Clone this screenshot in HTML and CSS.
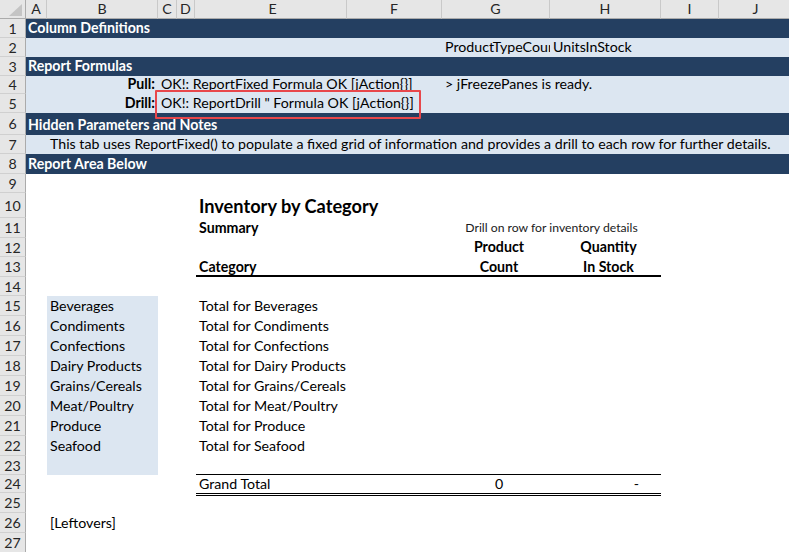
FILE: index.html
```html
<!DOCTYPE html>
<html>
<head>
<meta charset="utf-8">
<title>Inventory by Category</title>
<link rel="stylesheet" href="styles.css">
</head>
<body>
<div class="sheet">
  <div class="row h19 hdr">
    <div class="corner"><svg width="26" height="19" viewBox="0 0 26 19"><polygon points="22,4 22,16 9,16" fill="#c4c4c4"/></svg></div>
    <div class="colhdr A">A</div>
    <div class="colhdr B">B</div>
    <div class="colhdr C">C</div>
    <div class="colhdr D">D</div>
    <div class="colhdr E">E</div>
    <div class="colhdr F">F</div>
    <div class="colhdr G">G</div>
    <div class="colhdr H">H</div>
    <div class="colhdr I">I</div>
    <div class="colhdr J">J</div>
  </div>

  <div class="row h19">
    <div class="rh">1</div>
    <div class="cell all dark band">Column Definitions</div>
  </div>
  <div class="row h19">
    <div class="rh">2</div>
    <div class="all light"></div>
    <div class="cell G clip">ProductTypeCount</div>
    <div class="cell H">UnitsInStock</div>
  </div>
  <div class="row h19">
    <div class="rh">3</div>
    <div class="cell all dark band">Report Formulas</div>
  </div>
  <div class="row h18">
    <div class="rh">4</div>
    <div class="all light"></div>
    <div class="cell B right bold">Pull:</div>
    <div class="cell C">OK!: ReportFixed Formula OK [jAction{}]</div>
    <div class="cell G">&gt; jFreezePanes is ready.</div>
  </div>
  <div class="row h19">
    <div class="rh">5</div>
    <div class="all light"></div>
    <div class="cell B right bold">Drill:</div>
    <div class="cell C">OK!: ReportDrill " Formula OK [jAction{}]</div>
  </div>
  <div class="row h22">
    <div class="rh">6</div>
    <div class="cell all dark band">Hidden Parameters and Notes</div>
  </div>
  <div class="row h19">
    <div class="rh">7</div>
    <div class="all light"></div>
    <div class="cell B">This tab uses ReportFixed() to populate a fixed grid of information and provides a drill to each row for further details.</div>
  </div>
  <div class="row h20">
    <div class="rh">8</div>
    <div class="cell all dark band">Report Area Below</div>
  </div>
  <div class="row h19">
    <div class="rh">9</div>
  </div>
  <div class="row h25">
    <div class="rh">10</div>
    <div class="cell E title">Inventory by Category</div>
  </div>
  <div class="row h20">
    <div class="rh">11</div>
    <div class="cell E bold">Summary</div>
    <div class="cell GH center small">Drill on row for inventory details</div>
  </div>
  <div class="row h19">
    <div class="rh">12</div>
    <div class="cell G center bold hdrcol">Product</div>
    <div class="cell H center bold hdrcol">Quantity</div>
  </div>
  <div class="row h20">
    <div class="rh">13</div>
    <div class="EH rule-thick"></div>
    <div class="cell E bold">Category</div>
    <div class="cell G center bold hdrcol">Count</div>
    <div class="cell H center bold hdrcol">In Stock</div>
  </div>
  <div class="row h19">
    <div class="rh">14</div>
  </div>
  <div class="row h20">
    <div class="rh">15</div>
    <div class="cell B light">Beverages</div>
    <div class="cell E">Total for Beverages</div>
  </div>
  <div class="row h20">
    <div class="rh">16</div>
    <div class="cell B light">Condiments</div>
    <div class="cell E">Total for Condiments</div>
  </div>
  <div class="row h20">
    <div class="rh">17</div>
    <div class="cell B light">Confections</div>
    <div class="cell E">Total for Confections</div>
  </div>
  <div class="row h20">
    <div class="rh">18</div>
    <div class="cell B light">Dairy Products</div>
    <div class="cell E">Total for Dairy Products</div>
  </div>
  <div class="row h20">
    <div class="rh">19</div>
    <div class="cell B light">Grains/Cereals</div>
    <div class="cell E">Total for Grains/Cereals</div>
  </div>
  <div class="row h20">
    <div class="rh">20</div>
    <div class="cell B light">Meat/Poultry</div>
    <div class="cell E">Total for Meat/Poultry</div>
  </div>
  <div class="row h20">
    <div class="rh">21</div>
    <div class="cell B light">Produce</div>
    <div class="cell E">Total for Produce</div>
  </div>
  <div class="row h20">
    <div class="rh">22</div>
    <div class="cell B light">Seafood</div>
    <div class="cell E">Total for Seafood</div>
  </div>
  <div class="row h19">
    <div class="rh">23</div>
    <div class="cell B light"></div>
  </div>
  <div class="row h18">
    <div class="rh">24</div>
    <div class="EH rule-total"></div>
    <div class="cell E total">Grand Total</div>
    <div class="cell G center total hdrcol">0</div>
    <div class="cell H right acct total">-</div>
  </div>
  <div class="row h20">
    <div class="rh">25</div>
  </div>
  <div class="row h20">
    <div class="rh">26</div>
    <div class="cell B">[Leftovers]</div>
  </div>
  <div class="row h20">
    <div class="rh">27</div>
  </div>

  <div class="callout"></div>
</div>
</body>
</html>
```

FILE: styles.css
```css
* {
  box-sizing: border-box;
}

html, body {
  margin: 0;
  padding: 0;
  width: 789px;
  height: 552px;
  overflow: hidden;
  background: #ffffff;
}

body {
  font-family: Lato, "Liberation Sans", sans-serif;
  font-size: 14.2px;
  color: #000000;
}

.sheet {
  position: relative;
  display: flex;
  flex-direction: column;
  width: 793px;
}

.row {
  display: grid;
  grid-template-columns: 26px 21px 111px 19px 18px 152px 95px 108px 111px 58px 74px;
  grid-template-rows: minmax(0, 1fr);
  flex: none;
}

.row > * {
  grid-row: 1;
  min-width: 0;
}

.h18 { height: 18px; }
.h19 { height: 19px; }
.h20 { height: 20px; }
.h21 { height: 21px; }
.h22 { height: 22px; }
.h25 { height: 25px; }

.A { grid-column: 2; }
.B { grid-column: 3; }
.C { grid-column: 4; }
.D { grid-column: 5; }
.E { grid-column: 6; }
.F { grid-column: 7; }
.G { grid-column: 8; }
.H { grid-column: 9; }
.I { grid-column: 10; }
.J { grid-column: 11; }
.all { grid-column: 2 / -1; }
.EH { grid-column: 6 / 10; }
.GH { grid-column: 8 / 10; }

/* headers */
.corner {
  grid-column: 1;
  background: #e6e6e6;
  border-right: 1px solid #ababab;
  border-bottom: 1px solid #ababab;
  line-height: 0;
}

.colhdr {
  background: #e6e6e6;
  border-right: 1px solid #c9c9c9;
  border-bottom: 1px solid #ababab;
  color: #262626;
  text-align: center;
  line-height: 18px;
  font-size: 14.2px;
}

.rh {
  grid-column: 1;
  background: #e6e6e6;
  border-right: 1px solid #ababab;
  border-bottom: 1px solid #d0d0d0;
  color: #262626;
  display: flex;
  align-items: center;
  justify-content: center;
  font-size: 14.2px;
}

/* cells */
.cell {
  display: flex;
  align-items: flex-end;
  padding: 0 3px 1px 3px;
  white-space: nowrap;
  line-height: 18px;
}

.clip {
  overflow: hidden;
}

.right {
  justify-content: flex-end;
}

.center {
  justify-content: center;
}

.bold {
  font-weight: bold;
}

.dark {
  background: #243f61;
}

.band {
  color: #ffffff;
  font-weight: bold;
  padding-left: 2px;
}

.light {
  background: #dce6f1;
}

.title {
  font-size: 18.2px;
  font-weight: bold;
  line-height: 22px;
  padding-left: 5px;
}

.E {
  padding-left: 4px;
}

.hdrcol {
  padding-left: 7px;
  padding-right: 1px;
}

.small {
  font-size: 12.2px;
  color: #1a1a1a;
}

.acct {
  padding-right: 22px;
}

.total {
  padding-bottom: 0;
}

.rule-thick {
  border-bottom: 2px solid #000000;
  margin-left: 1px;
}

.rule-total {
  align-self: start;
  height: 22px;
  margin-top: -1px;
  margin-left: 1px;
  border-top: 1px solid #000000;
  border-bottom: 3px double #000000;
}

.callout {
  position: absolute;
  left: 155px;
  top: 90px;
  width: 266px;
  height: 29px;
  border: 2px solid #e8474b;
  border-radius: 1px;
}
```
